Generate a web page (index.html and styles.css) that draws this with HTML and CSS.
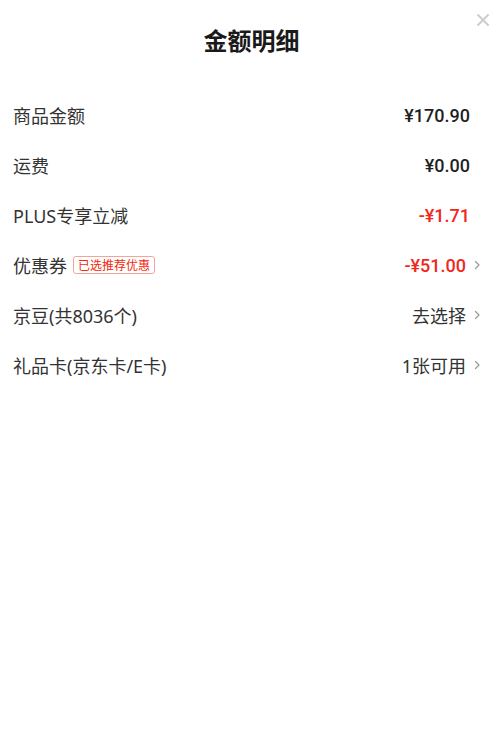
FILE: index.html
```html
<!DOCTYPE html>
<html lang="zh-CN">
<head>
<meta charset="utf-8">
<title>金额明细</title>
<link rel="stylesheet" href="styles.css">
</head>
<body>
<div class="sheet">
  <header class="header">
    <h1 class="title">金额明细</h1>
    <button class="close" aria-label="关闭">
      <svg width="12" height="12" viewBox="0 0 12 12"><path d="M1 1L11 11M11 1L1 11" stroke="#cccccc" stroke-width="1.8" fill="none" stroke-linecap="round"/></svg>
    </button>
  </header>
  <ul class="list">
    <li class="row">
      <span class="label">商品金额</span>
      <span class="value strong">¥170.90</span>
    </li>
    <li class="row">
      <span class="label">运费</span>
      <span class="value strong">¥0.00</span>
    </li>
    <li class="row">
      <span class="label">PLUS专享立减</span>
      <span class="value strong red">-¥1.71</span>
    </li>
    <li class="row">
      <span class="label">优惠券<span class="badge">已选推荐优惠</span></span>
      <span class="value strong red">-¥51.00<svg class="arrow" width="8" height="12" viewBox="0 0 8 12"><path d="M2.5 2.5L6 6L2.5 9.5" stroke="#999999" stroke-width="1.2" fill="none" stroke-linecap="round" stroke-linejoin="round"/></svg></span>
    </li>
    <li class="row">
      <span class="label">京豆(共8036个)</span>
      <span class="value">去选择<svg class="arrow" width="8" height="12" viewBox="0 0 8 12"><path d="M2.5 2.5L6 6L2.5 9.5" stroke="#999999" stroke-width="1.2" fill="none" stroke-linecap="round" stroke-linejoin="round"/></svg></span>
    </li>
    <li class="row">
      <span class="label">礼品卡(京东卡/E卡)</span>
      <span class="value">1张可用<svg class="arrow" width="8" height="12" viewBox="0 0 8 12"><path d="M2.5 2.5L6 6L2.5 9.5" stroke="#999999" stroke-width="1.2" fill="none" stroke-linecap="round" stroke-linejoin="round"/></svg></span>
    </li>
  </ul>
</div>
</body>
</html>
```
FILE: styles.css
```css
* { box-sizing: border-box; }
html, body {
  margin: 0;
  padding: 0;
  background: #ffffff;
}
body {
  font-family: "Noto Sans", "Noto Sans CJK SC", sans-serif;
  color: #333333;
}
.sheet {
  position: relative;
  width: 500px;
  min-height: 746px;
  background: #fff;
}
.header {
  height: 80px;
  display: flex;
  align-items: center;
  justify-content: center;
}
.title {
  margin: 0;
  font-family: "Noto Sans CJK SC", sans-serif;
  font-size: 24px;
  font-weight: 700;
  color: #1a1a1a;
  line-height: 1;
  padding-left: 3px;
}
.close {
  position: absolute;
  top: 14px;
  right: 11px;
  width: 12px;
  height: 12px;
  padding: 0;
  border: 0;
  background: none;
  display: block;
}
.close svg { display: block; }
.list {
  list-style: none;
  margin: 10px 0 0;
  padding: 0;
}
.row {
  height: 50px;
  display: flex;
  align-items: center;
  justify-content: space-between;
  padding: 0 30px 0 13px;
  font-size: 18px;
}
.label {
  display: flex;
  align-items: center;
  color: #333333;
}
.badge {
  margin-left: 6px;
  font-family: "Noto Sans CJK SC", sans-serif;
  font-size: 12px;
  line-height: 16px;
  padding: 0 4px;
  color: #f2270c;
  border: 1px solid #f3a59c;
  border-radius: 3px;
}
.value {
  display: flex;
  align-items: center;
  color: #333333;
}
.strong {
  font-family: "Roboto", "Noto Sans CJK SC", sans-serif;
  font-weight: 500;
  color: #1f1f1f;
}
.red { color: #f2271c; }
.arrow {
  display: block;
  margin-left: 7px;
  margin-right: -11px;
}
```
